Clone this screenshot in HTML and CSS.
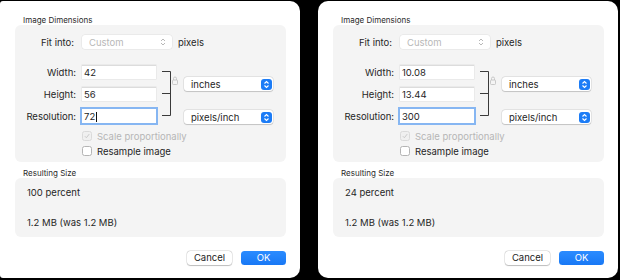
FILE: index.html
```html
<!DOCTYPE html>
<html lang="en">
<head>
    <meta charset="UTF-8">
    <title>Image Size</title>
    <link rel="stylesheet" href="styles.css">
</head>
<body>
    <div class="screen">
        <!-- dialog before the change -->
        <div class="dialog">
            <div class="group-title">Image Dimensions</div>
            <div class="group dims-group">
                <div class="fit-row">
                    <span class="label">Fit into:</span>
                    <div class="popup popup-off">
                        <span>Custom</span>
                        <svg width="8" height="10" viewBox="0 0 8 10"><path d="M2 4 L4 2 L6 4 M2 6 L4 8 L6 6" fill="none" stroke="#b8b8b8" stroke-width="1"/></svg>
                    </div>
                    <span>pixels</span>
                </div>
                <div class="dims">
                    <span class="label r1">Width:</span>
                    <div class="field r1">42</div>
                    <span class="label r2">Height:</span>
                    <div class="field r2">56</div>
                    <span class="label r3">Resolution:</span>
                    <div class="field r3 focused">72<span class="caret"></span></div>
                    <svg class="link" width="16" height="58" viewBox="0 0 16 58">
                        <path d="M0 6.5 H8.5 V50.5 H0 M0 28.5 H8.5" fill="none" stroke="#3a3a3a" stroke-width="1"/>
                        <path d="M11.5 15 V13.5 a1.5 1.5 0 0 1 3 0 V15" fill="none" stroke="#c4c4c4" stroke-width="0.9"/>
                        <rect x="10.5" y="15" width="5" height="4.5" rx="0.8" fill="none" stroke="#c4c4c4" stroke-width="0.9"/>
                    </svg>
                    <div class="popup unit-top">
                        <span>inches</span>
                        <svg class="stepper" width="11" height="11" viewBox="0 0 11 11"><rect width="11" height="11" rx="3" fill="#1c7cf6"/><path d="M3.5 4.5 L5.5 2.5 L7.5 4.5 M3.5 6.5 L5.5 8.5 L7.5 6.5" fill="none" stroke="#fff" stroke-width="1.1"/></svg>
                    </div>
                    <div class="popup unit-bottom">
                        <span>pixels/inch</span>
                        <svg class="stepper" width="11" height="11" viewBox="0 0 11 11"><rect width="11" height="11" rx="3" fill="#1c7cf6"/><path d="M3.5 4.5 L5.5 2.5 L7.5 4.5 M3.5 6.5 L5.5 8.5 L7.5 6.5" fill="none" stroke="#fff" stroke-width="1.1"/></svg>
                    </div>
                </div>
                <div class="check check-off">
                    <span class="box"><svg width="10" height="10" viewBox="0 0 10 10"><path d="M2.3 5.2 L4.2 7.2 L7.8 2.6" fill="none" stroke="#c8c8c8" stroke-width="1.2"/></svg></span>
                    Scale proportionally
                </div>
                <div class="check">
                    <span class="box"></span>
                    Resample image
                </div>
            </div>
            <div class="group-title">Resulting Size</div>
            <div class="group result">
                <div>100 percent</div>
                <div>1.2 MB (was 1.2 MB)</div>
            </div>
            <div class="buttons">
                <button class="btn">Cancel</button>
                <button class="btn btn-primary">OK</button>
            </div>
        </div>

        <!-- dialog after the change -->
        <div class="dialog">
            <div class="group-title">Image Dimensions</div>
            <div class="group dims-group">
                <div class="fit-row">
                    <span class="label">Fit into:</span>
                    <div class="popup popup-off">
                        <span>Custom</span>
                        <svg width="8" height="10" viewBox="0 0 8 10"><path d="M2 4 L4 2 L6 4 M2 6 L4 8 L6 6" fill="none" stroke="#b8b8b8" stroke-width="1"/></svg>
                    </div>
                    <span>pixels</span>
                </div>
                <div class="dims">
                    <span class="label r1">Width:</span>
                    <div class="field r1">10.08</div>
                    <span class="label r2">Height:</span>
                    <div class="field r2">13.44</div>
                    <span class="label r3">Resolution:</span>
                    <div class="field r3 focused">300</div>
                    <svg class="link" width="16" height="58" viewBox="0 0 16 58">
                        <path d="M0 6.5 H8.5 V50.5 H0 M0 28.5 H8.5" fill="none" stroke="#3a3a3a" stroke-width="1"/>
                        <path d="M11.5 15 V13.5 a1.5 1.5 0 0 1 3 0 V15" fill="none" stroke="#c4c4c4" stroke-width="0.9"/>
                        <rect x="10.5" y="15" width="5" height="4.5" rx="0.8" fill="none" stroke="#c4c4c4" stroke-width="0.9"/>
                    </svg>
                    <div class="popup unit-top">
                        <span>inches</span>
                        <svg class="stepper" width="11" height="11" viewBox="0 0 11 11"><rect width="11" height="11" rx="3" fill="#1c7cf6"/><path d="M3.5 4.5 L5.5 2.5 L7.5 4.5 M3.5 6.5 L5.5 8.5 L7.5 6.5" fill="none" stroke="#fff" stroke-width="1.1"/></svg>
                    </div>
                    <div class="popup unit-bottom">
                        <span>pixels/inch</span>
                        <svg class="stepper" width="11" height="11" viewBox="0 0 11 11"><rect width="11" height="11" rx="3" fill="#1c7cf6"/><path d="M3.5 4.5 L5.5 2.5 L7.5 4.5 M3.5 6.5 L5.5 8.5 L7.5 6.5" fill="none" stroke="#fff" stroke-width="1.1"/></svg>
                    </div>
                </div>
                <div class="check check-off">
                    <span class="box"><svg width="10" height="10" viewBox="0 0 10 10"><path d="M2.3 5.2 L4.2 7.2 L7.8 2.6" fill="none" stroke="#c8c8c8" stroke-width="1.2"/></svg></span>
                    Scale proportionally
                </div>
                <div class="check">
                    <span class="box"></span>
                    Resample image
                </div>
            </div>
            <div class="group-title">Resulting Size</div>
            <div class="group result">
                <div>24 percent</div>
                <div>1.2 MB (was 1.2 MB)</div>
            </div>
            <div class="buttons">
                <button class="btn">Cancel</button>
                <button class="btn btn-primary">OK</button>
            </div>
        </div>
    </div>
</body>
</html>
```

FILE: styles.css
```css
body, html {
    margin: 0;
    padding: 0;
    background: #000;
    font-family: 'Inter', 'Liberation Sans', sans-serif;
    font-size: 9.5px;
    color: #262626;
}
.screen {
    display: flex;
    gap: 18px;
    padding-top: 1px;
}
.dialog {
    width: 300px;
    height: 277px;
    box-sizing: border-box;
    background: #fff;
    border-radius: 10px;
    padding: 14px 14px 0 15px;
}
.dialog:first-child {
    border-radius: 3px 10px 10px 3px;
}
.group-title {
    font-size: 8px;
    line-height: 10px;
    margin-left: 8px;
    color: #2a2a2a;
}
.group {
    background: #f4f4f4;
    border-radius: 6px;
    box-sizing: border-box;
}
.dims-group {
    height: 137px;
    padding-top: 10px;
}
.label {
    text-align: right;
}
.fit-row {
    display: flex;
    align-items: center;
    gap: 6px;
    height: 14px;
}
.fit-row .label {
    width: 59px;
    margin-right: 2px;
}
.popup {
    height: 14px;
    box-sizing: border-box;
    background: #fff;
    border-radius: 3px;
    box-shadow: 0 0 0 0.5px rgba(0,0,0,0.12), 0 0.5px 1px rgba(0,0,0,0.15);
    display: flex;
    align-items: center;
    justify-content: space-between;
    padding: 0 1px 0 7px;
}
.popup-off {
    width: 90px;
    color: #b8b8b8;
    padding-right: 5px;
    box-shadow: 0 0 0 0.5px rgba(0,0,0,0.08);
}
.stepper {
    display: block;
}
.dims {
    display: grid;
    grid-template-columns: 61px 74px 16px 89px;
    grid-template-rows: 14px 14px 14px;
    column-gap: 6px;
    row-gap: 8px;
    align-items: center;
    margin-top: 16px;
}
.r1 { grid-row: 1; }
.r2 { grid-row: 2; }
.r3 { grid-row: 3; }
.dims .label { grid-column: 1; }
.field {
    grid-column: 2;
    height: 14px;
    box-sizing: border-box;
    background: #fff;
    border-top: 1px solid #dcdcdc;
    box-shadow: 0 0 0 0.5px rgba(0,0,0,0.08);
    line-height: 12px;
    padding-left: 2px;
    color: #1e1e1e;
    display: flex;
    align-items: center;
}
.focused {
    box-shadow: 0 0 0 2px #86b6f2;
    border-top-color: #fff;
}
.caret {
    width: 1px;
    height: 10px;
    background: #111;
    margin-left: 0.5px;
}
.link {
    grid-column: 3;
    grid-row: 1 / 4;
    display: block;
}
.unit-top {
    grid-column: 4;
    grid-row: 1 / 3;
    align-self: center;
    margin-top: 2px;
}
.unit-bottom {
    grid-column: 4;
    grid-row: 3;
    margin-top: 2px;
}
.check {
    display: flex;
    align-items: center;
    gap: 5px;
    margin-left: 67px;
    height: 10px;
    margin-top: 8px;
}
.check + .check {
    margin-top: 5px;
}
.box {
    width: 10px;
    height: 10px;
    box-sizing: border-box;
    border-radius: 2.5px;
    background: #fff;
    border: 0.5px solid #b4b4b4;
    display: flex;
    align-items: center;
    justify-content: center;
}
.check-off {
    color: #b6b6b6;
}
.check-off .box {
    background: #f0f0f0;
    border-color: #dadada;
}
.result {
    height: 59px;
    padding: 9px 12px 0;
    display: flex;
    flex-direction: column;
    gap: 18px;
    line-height: 12px;
}
.dialog .group-title + .result {
    margin-top: 0;
}
.result {
    margin-top: 0;
}
.dims-group + .group-title {
    margin-top: 6px;
}
.buttons {
    display: flex;
    justify-content: flex-end;
    gap: 9px;
    margin-top: 14px;
}
.btn {
    width: 45px;
    height: 14px;
    padding: 0;
    border: none;
    border-radius: 3.5px;
    font-family: inherit;
    font-size: 9.5px;
    line-height: 14px;
    background: #fff;
    color: #222;
    box-shadow: 0 0 0 0.5px rgba(0,0,0,0.15), 0 0.5px 1px rgba(0,0,0,0.2);
}
.btn-primary {
    background: linear-gradient(to bottom, #2b8cff, #1878f5);
    color: #fff;
    box-shadow: none;
}
```
